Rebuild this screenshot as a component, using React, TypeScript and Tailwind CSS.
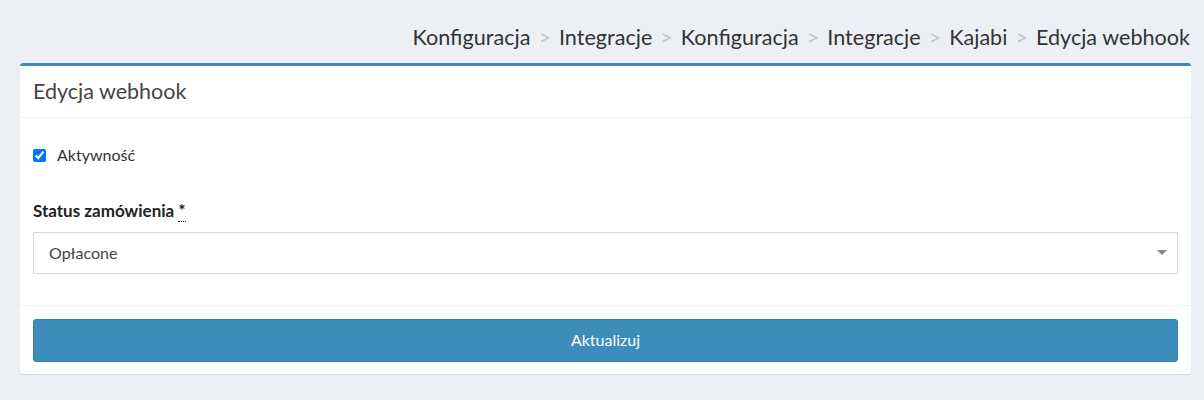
import { Fragment } from "react";

const CRUMBS = ["Konfiguracja", "Integracje", "Konfiguracja", "Integracje", "Kajabi", "Edycja webhook"];

export default function App() {
  return (
    <div className="min-h-[400px] w-full bg-[#ecf0f5] pl-[20px] pr-[13px] pt-[22px] text-[#333] font-['Lato','Open_Sans',sans-serif]">
      {/* Breadcrumb */}
      <div className="flex justify-end pr-[1px] text-[21.6px] leading-[30px] text-[#333]">
        {CRUMBS.map((c, i) => (
          <Fragment key={i}>
            {i > 0 && <span className="px-[8px] text-[#c4c4c4]">&gt;</span>}
            <span>{c}</span>
          </Fragment>
        ))}
      </div>

      {/* Card */}
      <div className="mt-[11px] rounded-[3px] border-t-[3px] border-[#3c8dbc] bg-white shadow-[0_1px_1px_rgba(0,0,0,0.12)]">
        <div className="flex h-[52px] items-center border-b border-[#f0f0f0] px-[13px] text-[21.5px] text-[#444]">
          Edycja webhook
        </div>

        <div className="px-[13px] pt-[25px] pb-[31px]">
          <label className="flex items-center gap-[11px] text-[16px]">
            <input type="checkbox" defaultChecked className="h-[13px] w-[13px]" />
            Aktywność
          </label>

          <div className="mt-[31px] text-[17px] font-bold text-[#222]">
            Status zamówienia{" "}
            <span className="border-b border-dotted border-[#222]">*</span>
          </div>
          <div className="mt-[8px] flex h-[42px] items-center justify-between border border-[#d2d6de] pl-[15px] pr-[10px] text-[16px] text-[#444]">
            <span>Opłacone</span>
            <span className="h-0 w-0 border-x-[5px] border-t-[5px] border-x-transparent border-t-[#888]" />
          </div>
        </div>

        <div className="border-t border-[#f4f4f4] px-[13px] pt-[13px] pb-[12px]">
          <button className="flex h-[43px] w-full items-center justify-center rounded-[3px] border border-[#367fa9] bg-[#3c8dbc] text-[16px] text-white">
            Aktualizuj
          </button>
        </div>
      </div>
    </div>
  );
}
